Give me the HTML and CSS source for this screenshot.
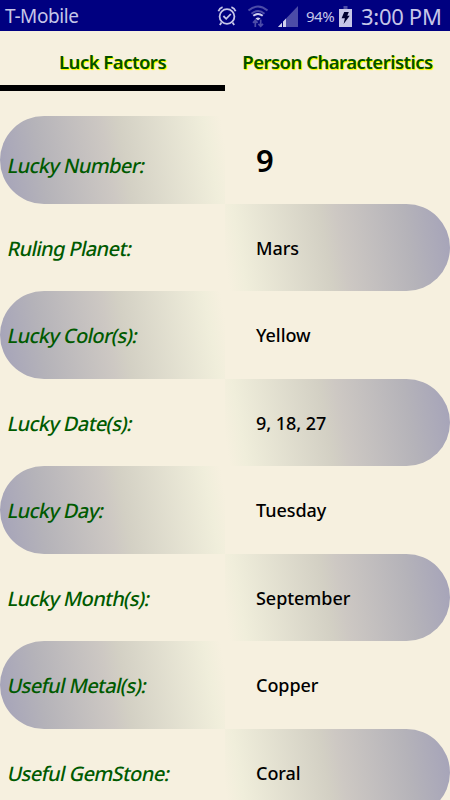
FILE: index.html
```
<!DOCTYPE html>
<html lang="en">
	<head>
		<meta charset="utf-8">
		<title>Luck Factors</title>
		<link rel="stylesheet" href="styles.css">
	</head>
	<body>
		<div class="statusbar">
			<span class="carrier">T-Mobile</span>
			<!-- alarm -->
			<svg class="alarm" width="20" height="22" viewBox="0 0 20 22" fill="none" stroke="#c6c6e8" stroke-width="1.8">
				<circle cx="10" cy="11.5" r="7.4"/>
				<path d="M1.4 6.2Q2.5 3.2 5.6 2.2M18.6 6.2Q17.5 3.2 14.4 2.2M4.5 17.5L2.8 20M15.5 17.5L17.2 20M6.4 11l2.8 2.8 4.6-4.8"/>
			</svg>
			<!-- wifi -->
			<svg class="wifi" width="22" height="23" viewBox="0 0 22 23" fill="none" stroke-width="2">
				<path stroke="#4c4ca8" d="M1.5 5.5Q11-2.5 20.5 5.5M4.5 8.7Q11 3.2 17.5 8.7"/>
				<path stroke="#d0d0ee" d="M6.3 10.8Q11 7.2 15.7 10.8"/>
				<path fill="#d0d0ee" d="M8.5 13.4Q11 11.6 13.5 13.4L11 15.6Z"/>
				<path stroke="#4c4ca8" stroke-width="1.7" d="M8.3 22V15.5M6 17.8l2.3-2.5 2.3 2.5M13.7 14.5V21M11.4 18.8l2.3 2.5 2.3-2.5"/>
			</svg>
			<!-- signal -->
			<svg class="signal" width="21" height="21" viewBox="0 0 21 21">
				<path fill="#4c4ca8" d="M20 0V21H0Z"/>
				<path fill="#d0d0ee" d="M8 12.6V21H0Z"/>
				<path stroke="#000080" d="M4.5 14V21"/>
			</svg>
			<span class="percent">94%</span>
			<!-- battery -->
			<svg class="battery" width="13" height="21" viewBox="0 0 13 21">
				<path fill="#4c4ca8" d="M4.5 0h4v3h-4z"/>
				<path fill="#c6c6e8" d="M0 3h13v18H0z"/>
				<path fill="#000030" d="M5.2 6h4.6L8.3 9.8h2.4L4.6 18l1.3-5.7H2.6z"/>
			</svg>
			<span class="clock">3:00 PM</span>
		</div>

		<div class="tabs">
			<div class="tab active"><span class="tab1">Luck Factors</span></div>
			<div class="tab"><span class="tab2">Person Characteristics</span></div>
		</div>

		<div class="factors">
			<div class="row first"><div class="label"><span>Lucky Number:</span></div><div class="value">9</div></div>
			<div class="row"><div class="label"><span>Ruling Planet:</span></div><div class="value">Mars</div></div>
			<div class="row"><div class="label"><span>Lucky Color(s):</span></div><div class="value">Yellow</div></div>
			<div class="row"><div class="label"><span>Lucky Date(s):</span></div><div class="value">9, 18, 27</div></div>
			<div class="row"><div class="label"><span>Lucky Day:</span></div><div class="value">Tuesday</div></div>
			<div class="row"><div class="label"><span>Lucky Month(s):</span></div><div class="value">September</div></div>
			<div class="row"><div class="label"><span>Useful Metal(s):</span></div><div class="value">Copper</div></div>
			<div class="row"><div class="label"><span>Useful GemStone:</span></div><div class="value">Coral</div></div>
		</div>
	</body>
</html>
```
FILE: styles.css
```
*{
	box-sizing:border-box;
}
body{
	margin:0;
	height:800px;
	overflow:hidden;
	background:#f6f0df;
	font-family:"Noto Sans","Open Sans",sans-serif;
	font-weight:500;
	white-space:nowrap;
}

/* status bar */
.statusbar{
	height:31px;
	display:flex;
	align-items:center;
	padding:1px 0 0 5px;
	background:#000080;
	color:#c6c6e8;
	font-weight:400;
}
.statusbar svg{
	flex:none;
}
.carrier{
	width:212px;
	font-size:19px;
	letter-spacing:-0.4px;
}
.wifi{
	margin-left:10px;
}
.signal{
	margin-left:9px;
}
.percent{
	width:33px;
	margin-left:7px;
	font-size:15px;
	letter-spacing:-0.5px;
}
.battery{
	margin-left:0;
}
.clock{
	margin-left:9px;
	font-size:22px;
	letter-spacing:-0.3px;
}

/* tabs */
.tabs{
	height:60px;
	display:flex;
}
.tab{
	width:225px;
	padding-top:17px;
	text-align:center;
	line-height:28px;
	font-size:18.5px;
	font-weight:600;
	color:#005000;
	text-shadow:1px 1px 0 #ff0,1px 1px 1px #ff0;
}
.active{
	border-bottom:6px solid #000;
}
.tab1{
	letter-spacing:-0.5px;
}
.tab2{
	letter-spacing:-0.5px;
}

/* rows */
.factors{
	padding-top:25px;
}
.row{
	height:87.5px;
	display:flex;
	line-height:89px;
}
.label,.value{
	width:225px;
	height:87.5px;
}
.label{
	padding-left:8px;
	color:#005a00;
	font-size:20px;
	letter-spacing:-0.6px;
}
/* slanted upright letters */
.label span{
	display:inline-block;
	transform:skewX(-12deg);
}
.value{
	padding-left:31px;
	color:#000;
	font-size:18px;
	letter-spacing:-0.05px;
}
.row:nth-child(odd) .label{
	border-radius:44px 0 0 44px;
	background:linear-gradient(80deg,#a4a2b9 0%,#b5b3b9 20%,#cdc8c3 48%,#d3d0c4 55%,#f0eedb 91%,#f6f0df 98%);
}
.row:nth-child(even) .value{
	border-radius:0 44px 44px 0;
	background:linear-gradient(260deg,#a4a2b9 0%,#b5b3b9 20%,#cdc8c3 48%,#d3d0c4 55%,#f0eedb 91%,#f6f0df 98%);
}
.first .label{
	padding-top:5px;
}
.first .value{
	font-size:31px;
	font-weight:600;
}
```
